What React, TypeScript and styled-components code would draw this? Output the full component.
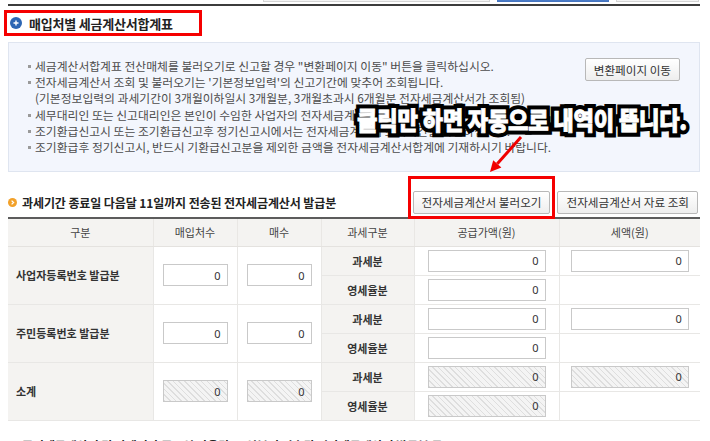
import React from "react";
import styled, { createGlobalStyle, css } from "styled-components";

const Global = createGlobalStyle`
  html, body { margin: 0; padding: 0; background: #fff; }
  body { font-family: "Noto Sans CJK KR", "Noto Sans", sans-serif; color: #333; }
  #root { width: 710px; height: 441px; overflow: hidden; }
  * { box-sizing: border-box; }
`;

const Page = styled.div`
  position: relative;
  padding: 0 10px 0 8px;
`;

const TabStrip = styled.div`
  display: flex;
  height: 4px;
  padding-left: 255px;
  gap: 7px;
  align-items: flex-start;
`;

const Tab = styled.div<{ $w: number; $active?: boolean }>`
  width: ${(p) => p.$w}px;
  height: 2px;
  border: 1px solid ${(p) => (p.$active ? "#4675c0" : "#d4d4d4")};
  border-top: none;
  background: ${(p) => (p.$active ? "#4a7bc6" : "#f4f4f4")};
`;

const TopRule = styled.div`
  height: 2px;
  background: #3c3c3c;
`;

const TitleRow = styled.div`
  height: 36px;
  padding-top: 4px;
`;

const TitleFrame = styled.div`
  display: inline-flex;
  align-items: center;
  gap: 7px;
  margin-left: -4px;
  width: 198px;
  height: 26px;
  padding-left: 3px;
  border: 3px solid #f50000;
`;

const TitleText = styled.h1`
  margin: 0;
  font-size: 13px;
  font-weight: 700;
  color: #222;
  letter-spacing: -0.2px;
`;

const InfoBox = styled.div`
  display: flex;
  justify-content: space-between;
  align-items: flex-start;
  border: 1px solid #dfe5f0;
  background: #f3f6fd;
  padding: 15px 19px 16px 19px;
`;

const InfoList = styled.ul`
  margin: 0;
  padding: 0;
  list-style: none;
  font-size: 11.8px;
  line-height: 16.2px;
  color: #4c4c4c;
  white-space: nowrap;
`;

const InfoItem = styled.li<{ $plain?: boolean }>`
  position: relative;
  padding-left: 7px;
  &::before {
    content: "";
    display: ${(p) => (p.$plain ? "none" : "block")};
    position: absolute;
    left: 0;
    top: 7px;
    width: 3px;
    height: 3px;
    background: #9a9a9a;
  }
`;

const Btn = styled.button`
  height: 23px;
  padding: 0 8px;
  border: 1px solid #b8b8b8;
  border-radius: 2px;
  background: linear-gradient(#ffffff, #eeeeee);
  font-family: inherit;
  font-size: 11.6px;
  color: #333;
  white-space: nowrap;
  cursor: pointer;
`;

const SectionHead = styled.div`
  display: flex;
  align-items: center;
  justify-content: space-between;
  height: 22px;
  margin: 19px 0 4px;
`;

const SectionTitle = styled.h2`
  display: flex;
  align-items: center;
  gap: 5px;
  margin: 0;
  font-size: 12px;
  font-weight: 700;
  letter-spacing: -0.1px;
  color: #222;
  white-space: nowrap;
`;

const BtnGroup = styled.div`
  display: flex;
  gap: 7px;
  margin-right: 2px;
`;

const Highlight = styled.div`
  position: relative;
  display: flex;
  &::after {
    content: "";
    position: absolute;
    top: -15px;
    left: -5px;
    right: -5px;
    bottom: -5px;
    border: 3px solid #f50000;
    pointer-events: none;
  }
`;

const Table = styled.table`
  width: 692px;
  border-collapse: collapse;
  table-layout: fixed;
  border-top: 2px solid #5c5c5c;
  font-size: 11px;
`;

const Th = styled.th`
  height: 28px;
  background: #f4f3f1;
  font-weight: 400;
  color: #444;
  border-left: 1px solid #e9e7e4;
  border-bottom: 1px solid #e4e2df;
  &:first-child { border-left: none; }
`;

const Td = styled.td<{ $label?: boolean; $left?: boolean; $first?: boolean }>`
  height: 29px;
  padding: 0;
  background: ${(p) => (p.$label ? "#f4f3f1" : "#fff")};
  border: 1px solid #e8e7e5;
  text-align: ${(p) => (p.$left ? "left" : "center")};
  padding-left: ${(p) => (p.$left ? "8px" : "0")};
  font-weight: ${(p) => (p.$label ? 700 : 400)};
  color: #333;
  white-space: nowrap;
  vertical-align: middle;
  ${(p) => p.$first && css`border-left: none;`}
  &:last-child { border-right: none; }
`;

const NumInput = styled.input<{ $w: number; $off?: boolean }>`
  display: block;
  margin: 0 auto;
  width: ${(p) => p.$w}px;
  height: 22px;
  padding: 0 6px 0 0;
  border: 1px solid #c9c9c9;
  font-family: "Noto Sans", sans-serif;
  font-size: 11px;
  color: #333;
  text-align: right;
  outline: none;
  background: ${(p) =>
    p.$off
      ? "repeating-linear-gradient(45deg, #dedede 0 1px, #f4f4f4 1px 4px)"
      : "#fff"};
`;

const NextSection = styled.div`
  margin-top: 16px;
`;

const Annotation = styled.div`
  position: absolute;
  left: 357px;
  top: 105px;
  display: grid;
  font-size: 25px;
  font-weight: 900;
  line-height: 28px;
  white-space: nowrap;
  letter-spacing: -0.3px;
  transform: scaleX(0.89);
  transform-origin: left center;
`;

const AnnoStroke = styled.span`
  grid-area: 1 / 1;
  color: #000;
  -webkit-text-stroke: 9px #000;
`;

const AnnoFill = styled.span`
  grid-area: 1 / 1;
  color: #fff;
  -webkit-text-stroke: 0.8px #fff;
`;

const ArrowSvg = styled.svg`
  position: absolute;
  left: 480px;
  top: 130px;
  overflow: visible;
`;

const PlusIcon = () => (
  <svg width="12" height="12" viewBox="0 0 12 12">
    <circle cx="6" cy="6" r="6" fill="#2d66b3" />
    <path d="M3.5 6h5M6 3.5v5" stroke="#fff" strokeWidth="1.4" />
  </svg>
);

const ChevIcon = () => (
  <svg width="9" height="9" viewBox="0 0 9 9">
    <circle cx="4.5" cy="4.5" r="4.5" fill="#f2a12a" />
    <path d="M3.6 2.6l2 1.9-2 1.9" stroke="#fff" strokeWidth="1.3" fill="none" />
  </svg>
);

type RowDef = { label: string; off?: boolean };
const rows: RowDef[] = [
  { label: "사업자등록번호 발급분" },
  { label: "주민등록번호 발급분" },
  { label: "소계", off: true },
];

export default function App() {
  return (
    <>
      <Global />
      <Page>
        <TabStrip>
          <Tab $w={227} />
          <Tab $w={112} $active />
          <Tab $w={83} />
        </TabStrip>
        <TopRule />
        <TitleRow>
          <TitleFrame>
            <PlusIcon />
            <TitleText>매입처별 세금계산서합계표</TitleText>
          </TitleFrame>
        </TitleRow>

        <InfoBox>
          <InfoList>
            <InfoItem>세금계산서합계표 전산매체를 불러오기로 신고할 경우 "변환페이지 이동" 버튼을 클릭하십시오.</InfoItem>
            <InfoItem>전자세금계산서 조회 및 불러오기는 '기본정보입력'의 신고기간에 맞추어 조회됩니다.</InfoItem>
            <InfoItem $plain>(기본정보입력의 과세기간이 3개월이하일시 3개월분, 3개월초과시 6개월분 전자세금계산서가 조회됨)</InfoItem>
            <InfoItem>세무대리인 또는 신고대리인은 본인이 수임한 사업자의 전자세금계산서만 조회할 수 있습니다.</InfoItem>
            <InfoItem>조기환급신고시 또는 조기환급신고후 정기신고시에서는 전자세금계산서 조회기간을 확인하십시오.</InfoItem>
            <InfoItem>조기환급후 정기신고시, 반드시 기환급신고분을 제외한 금액을 전자세금계산서합계에 기재하시기 바랍니다.</InfoItem>
          </InfoList>
          <Btn>변환페이지 이동</Btn>
        </InfoBox>

        <SectionHead>
          <SectionTitle>
            <ChevIcon />
            과세기간 종료일 다음달 11일까지 전송된 전자세금계산서 발급분
          </SectionTitle>
          <BtnGroup>
            <Highlight>
              <Btn>전자세금계산서 불러오기</Btn>
            </Highlight>
            <Btn>전자세금계산서 자료 조회</Btn>
          </BtnGroup>
        </SectionHead>

        <Table>
          <colgroup>
            <col style={{ width: 145 }} />
            <col style={{ width: 84 }} />
            <col style={{ width: 84 }} />
            <col style={{ width: 93 }} />
            <col style={{ width: 145 }} />
            <col style={{ width: 141 }} />
          </colgroup>
          <thead>
            <tr>
              <Th>구분</Th>
              <Th>매입처수</Th>
              <Th>매수</Th>
              <Th>과세구분</Th>
              <Th>공급가액(원)</Th>
              <Th>세액(원)</Th>
            </tr>
          </thead>
          <tbody>
            {rows.map((r) => (
              <React.Fragment key={r.label}>
                <tr>
                  <Td rowSpan={2} $label $left $first>{r.label}</Td>
                  <Td rowSpan={2}><NumInput $w={65} $off={r.off} readOnly value="0" /></Td>
                  <Td rowSpan={2}><NumInput $w={65} $off={r.off} readOnly value="0" /></Td>
                  <Td $label>과세분</Td>
                  <Td><NumInput $w={118} $off={r.off} readOnly value="0" /></Td>
                  <Td><NumInput $w={118} $off={r.off} readOnly value="0" /></Td>
                </tr>
                <tr>
                  <Td $label>영세율분</Td>
                  <Td><NumInput $w={118} $off={r.off} readOnly value="0" /></Td>
                  <Td />
                </tr>
              </React.Fragment>
            ))}
          </tbody>
        </Table>

        <NextSection>
          <SectionTitle>
            <ChevIcon />
            종이세금계산서 및 과세기간 종료일 다음달 12일부터 전송된 전자세금계산서 발급분 등
          </SectionTitle>
        </NextSection>

        <Annotation>
          <AnnoStroke>클릭만 하면 자동으로 내역이 뜹니다.</AnnoStroke>
          <AnnoFill>클릭만 하면 자동으로 내역이 뜹니다.</AnnoFill>
        </Annotation>

        <ArrowSvg width="50" height="50" viewBox="0 0 50 50">
          <line x1="41" y1="7" x2="17.3" y2="33.8" stroke="#f00000" strokeWidth="3" />
          <polygon points="10,42 21.4,37.4 13.2,30.2" fill="#f00000" />
        </ArrowSvg>
      </Page>
    </>
  );
}
